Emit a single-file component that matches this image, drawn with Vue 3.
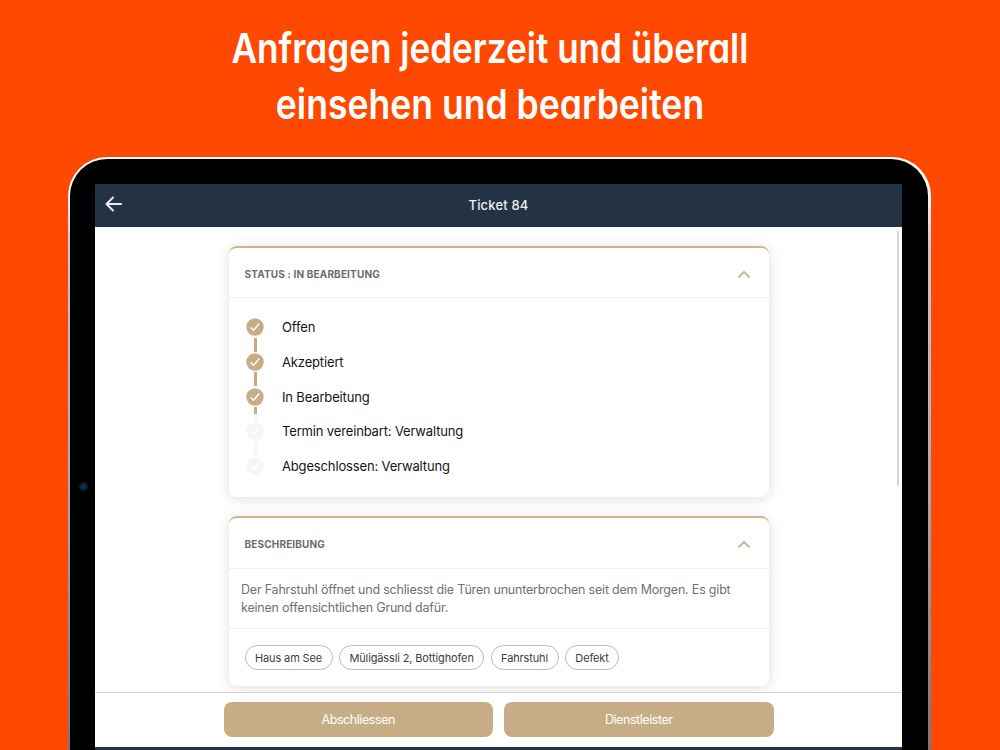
<template>
  <main class="promo">
    <h1 class="headline">
      <span class="headline-line first">Anfragen jederzeit und überall</span>
      <span class="headline-line second">einsehen und bearbeiten</span>
    </h1>

    <div class="tablet">
      <div class="bezel">
        <span class="camera" />
        <div class="screen">
          <header class="navbar">
            <svg class="back" width="18" height="16" viewBox="0 0 18 16">
              <path d="M8 1.5L1.5 8L8 14.5M1.8 8H16" />
            </svg>
            <span class="navbar-title">Ticket 84</span>
          </header>

          <div class="content">
            <section class="card status-card">
              <div class="card-header">
                <h2 class="card-title">Status : In Bearbeitung</h2>
                <svg class="chevron" width="14" height="9" viewBox="0 0 14 9">
                  <path d="M1.5 7.4L7 1.9L12.5 7.4" />
                </svg>
              </div>
              <ul class="steps">
                <li
                  v-for="step in steps"
                  :key="step.label"
                  class="step"
                  :class="[step.state, step.line]"
                >
                  <svg class="step-icon" width="18" height="18" viewBox="0 0 18 18">
                    <circle cx="9" cy="9" r="8.7" />
                    <path d="M4.7 9.5L7.6 12.3L13.2 5.5" />
                  </svg>
                  <span class="step-label">{{ step.label }}</span>
                </li>
              </ul>
            </section>

            <section class="card description-card">
              <div class="card-header">
                <h2 class="card-title">Beschreibung</h2>
                <svg class="chevron" width="14" height="9" viewBox="0 0 14 9">
                  <path d="M1.5 7.4L7 1.9L12.5 7.4" />
                </svg>
              </div>
              <p class="description">
                Der Fahrstuhl öffnet und schliesst die Türen ununterbrochen seit dem Morgen. Es gibt<br />
                keinen offensichtlichen Grund dafür.
              </p>
              <div class="tags">
                <span v-for="tag in tags" :key="tag" class="tag">{{ tag }}</span>
              </div>
            </section>
            <span class="scrollbar" />
          </div>

          <footer class="actions">
            <button v-for="action in actions" :key="action" class="action">{{ action }}</button>
          </footer>
        </div>
      </div>
    </div>
  </main>
</template>

<script setup>
const steps = [
  { label: 'Offen', state: 'done', line: 'line-done' },
  { label: 'Akzeptiert', state: 'done', line: 'line-done' },
  { label: 'In Bearbeitung', state: 'done', line: 'line-half' },
  { label: 'Termin vereinbart: Verwaltung', state: 'open', line: 'line-open' },
  { label: 'Abgeschlossen: Verwaltung', state: 'open', line: 'line-none' },
]

const tags = ['Haus am See', 'Müligässli 2, Bottighofen', 'Fahrstuhl', 'Defekt']

const actions = ['Abschliessen', 'Dienstleister']
</script>

<style>
body {
  margin: 0;
  background: #ff4800;
}
</style>

<style scoped>
.promo {
  box-sizing: border-box;
  width: 1000px;
  height: 750px;
  padding-top: 20px;
  overflow: hidden;
  background: #ff4800;
  font-family: Inter, "Liberation Sans", sans-serif;
}

.headline {
  display: flex;
  flex-direction: column;
  align-items: center;
  width: 980px;
  height: 137px;
  margin: 0;
  color: #fff;
  font-size: 41px;
  font-weight: 600;
  line-height: 56px;
  font-feature-settings: "cv11", "ss03";
}

.headline-line {
  white-space: nowrap;
}

.headline-line.first {
  transform: scaleX(0.856);
}

.headline-line.second {
  transform: scaleX(0.867);
}

.tablet {
  box-sizing: border-box;
  width: 863px;
  height: 640px;
  margin-left: 68px;
  padding: 2px 3px 0 2px;
  border-radius: 39px 39px 0 0;
  background: linear-gradient(#fff 0, #fff 25px, #c8c8c8 90px, #aaa 330px, #777 593px);
}

.bezel {
  position: relative;
  box-sizing: border-box;
  height: 638px;
  padding: 25px 26px 0 25px;
  border-radius: 37px 37px 0 0;
  background: #000;
}

.camera {
  position: absolute;
  top: 323px;
  left: 9px;
  width: 9px;
  height: 9px;
  border-radius: 50%;
  background: radial-gradient(#173e6c 0, #0c203a 45%, #08101a 100%);
}

.screen {
  display: flex;
  flex-direction: column;
  width: 807px;
  height: 566px;
  background: #233343;
}

.navbar {
  display: grid;
  grid-template-columns: 36px 1fr 36px;
  align-items: center;
  height: 43px;
  color: #eceef0;
}

.back {
  margin: -3px 0 0 9.5px;
  fill: none;
  stroke: #eeebf0;
  stroke-width: 2;
  stroke-linecap: round;
  stroke-linejoin: round;
}

.navbar-title {
  padding-bottom: 2px;
  text-align: center;
  font-size: 13px;
  font-weight: 500;
  letter-spacing: 0.16px;
}

.content {
  position: relative;
  display: flex;
  flex-direction: column;
  align-items: center;
  gap: 19px;
  box-sizing: border-box;
  height: 465px;
  padding-top: 19px;
  overflow: hidden;
  background: #fff;
}

.scrollbar {
  position: absolute;
  top: 4px;
  right: 3px;
  width: 2px;
  height: 255px;
  background: #d9d9d9;
}

.card {
  box-sizing: border-box;
  width: 540px;
  border-top: 2px solid #cdb58e;
  border-radius: 8px;
  background: #fff;
  box-shadow: 0 2px 14px rgba(0, 0, 0, 0.13);
}

.status-card {
  height: 251px;
}

.description-card {
  height: 170px;
}

.card-header {
  display: flex;
  align-items: center;
  justify-content: space-between;
  height: 49px;
  padding: 1px 18px 0 16px;
  border-bottom: 1px solid #efefef;
}

.status-card .card-header {
  height: 47px;
  padding-top: 2px;
}

.card-title {
  margin: 0;
  color: #6c6c6c;
  font-size: 10px;
  font-weight: 700;
  letter-spacing: 0.16px;
  text-transform: uppercase;
}

.chevron {
  margin-top: 1px;
  fill: none;
  stroke: #c7ad85;
  stroke-width: 1.8;
}

.steps {
  margin: 0;
  padding: 11.8px 0 0 17.8px;
  list-style: none;
}

.step {
  position: relative;
  display: flex;
  align-items: center;
  gap: 17.7px;
  height: 34.7px;
}

.step::after {
  content: "";
  position: absolute;
  top: 28px;
  left: 7.5px;
  width: 3px;
  height: 14px;
  background: #c7ad85;
}

.line-half::after {
  background: linear-gradient(#c7ad85 0 7px, #f6f6f6 7px);
}

.line-open::after {
  background: #f6f6f6;
}

.line-none::after {
  display: none;
}

.step-icon circle {
  fill: #c7ad85;
}

.step-icon path {
  fill: none;
  stroke: #fff;
  stroke-width: 1.4;
}

.open .step-icon circle {
  fill: #f6f6f6;
}

.step-label {
  color: #151515;
  font-size: 13px;
  letter-spacing: -0.15px;
}

.description {
  margin: 0;
  padding: 12px 0 12px 12.5px;
  border-bottom: 1px solid #efefef;
  color: #717171;
  font-size: 12.5px;
  line-height: 17.5px;
  letter-spacing: -0.2px;
  white-space: nowrap;
}

.tags {
  display: flex;
  gap: 6.3px;
  padding: 16px 0 0 16px;
}

.tag {
  box-sizing: border-box;
  height: 25px;
  padding: 0 9.5px;
  border: 1px solid #bcbcbc;
  border-radius: 13px;
  color: #3d3d3d;
  font-size: 11px;
  line-height: 24px;
  letter-spacing: -0.13px;
}

.actions {
  display: flex;
  justify-content: center;
  gap: 11px;
  box-sizing: border-box;
  height: 55px;
  padding: 9px 0 0;
  border-top: 1px solid #d2d2d2;
  background: #fff;
}

.action {
  width: 269.5px;
  height: 35px;
  padding: 0 0 1px;
  border: 0;
  border-radius: 8px;
  background: #c7ad85;
  color: #fff;
  font-family: inherit;
  font-size: 12.5px;
  letter-spacing: -0.43px;
}
</style>
